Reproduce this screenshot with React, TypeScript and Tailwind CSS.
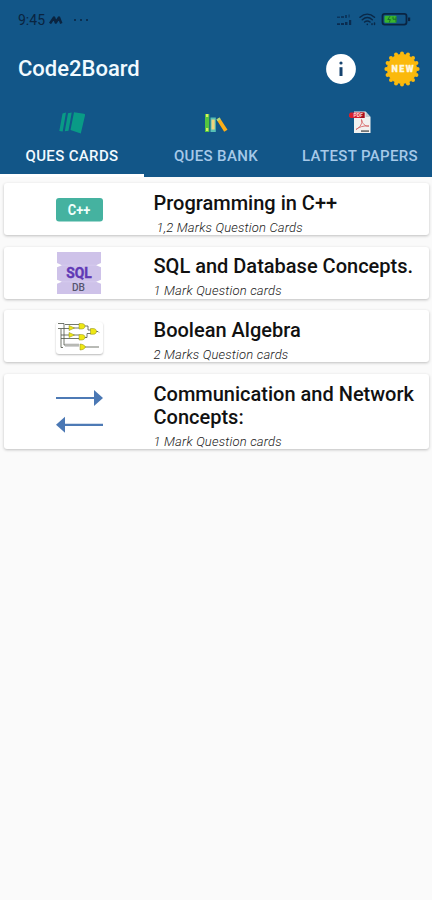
import type { ReactNode } from 'react';

function MotorolaIcon() {
  return (
    <svg width="14" height="8" viewBox="0 0 14 8" fill="none" stroke="#0a2440" strokeWidth="2.5" strokeLinejoin="round">
      <path d="M1 7.5 5 1.5 6.8 6.5 10 1.5 12.3 7.5" />
    </svg>
  );
}

function StatusIcons() {
  return (
    <svg width="76" height="16" viewBox="0 0 76 16" fill="none">
      <g fill="#0a2c50">
        <path d="M1 4.5h3v1.5H1zM5 4h3v2H5zM9 3h2v3H9zM12.5 2.5h1.2v3h-1.2z" opacity=".75" />
        <path d="M1 11.2h3v1.8H1zM5 11h3v2H5zM9 10h2.5v3H9zM13 8h2.2v5H13z" />
      </g>
      <g stroke="#0a2847" strokeWidth="1.5" strokeLinecap="round">
        <path d="M24 5.3c4.5-4 10-4 14.5 0M26.3 7.7c3.2-2.8 6.8-2.8 10 0M28.6 10c1.8-1.4 3.6-1.4 5.4 0" />
        <path d="M31.3 12.3v.1M36 11.8v.6M38.5 11v1.4" />
      </g>
      <rect x="46.5" y="1.8" width="24" height="10.8" rx="2.3" stroke="#0a2442" strokeWidth="1.8" />
      <path d="M72 5.5h2.2v3.6H72z" fill="#0a2442" />
      <rect x="48.5" y="3.8" width="12" height="6.9" rx="1" fill="#39b52d" />
      <path d="m54 4.2-2.2 3.3h2.5l-1 3M57 4.7v2.5h3M60 4.7v5.5" stroke="#17672d" strokeWidth=".9" />
    </svg>
  );
}

function InfoIcon() {
  return (
    <svg width="30" height="30" viewBox="0 0 30 30">
      <circle cx="15" cy="15" r="14.9" fill="#fff" />
      <circle cx="15" cy="9" r="1.6" fill="#16436f" />
      <path d="M13.5 13.2h3V22h-3z" fill="#16436f" />
    </svg>
  );
}

function NewBadge() {
  const points = Array.from({ length: 16 }, (_, i) => {
    const angle = (i * Math.PI) / 8;
    return { x: 18 + 15.6 * Math.sin(angle), y: 18 - 15.6 * Math.cos(angle) };
  });

  return (
    <svg width="36" height="36" viewBox="0 0 36 36">
      <g fill="#fbb90c">
        <circle cx="18" cy="18" r="15" />
        {points.map((point, index) => (
          <circle key={index} cx={point.x} cy={point.y} r="2" />
        ))}
      </g>
      <text x="18.5" y="21.2" textAnchor="middle" textLength="22" fill="#fff7df" stroke="#fff7df" strokeWidth=".3" className="font-[Roboto,sans-serif] text-[9px] font-black">
        NEW
      </text>
    </svg>
  );
}

function CardsIcon() {
  return (
    <svg width="28" height="24" viewBox="0 0 28 24" fill="#099b86">
      <path d="M4.5 2.5 8 1.5 4.7 20.5 1.3 20zM10 2.2l3.7-.7-3.2 18.3-3.7.5zM16 1.3l10 1.5c.9.2 1.2.8 1 1.6L22.8 22.5 12.5 19z" />
    </svg>
  );
}

function BooksIcon() {
  return (
    <svg width="24" height="20" viewBox="0 0 24 20">
      <path d="M1 1h4.3v18H1z" fill="#54c43f" />
      <path d="M2 1h2.3v3H2zM2 15h2.3v3H2z" fill="#d8ed62" />
      <path d="M6.5 4.5h5.3V19H6.5z" fill="#57c0b4" />
      <path d="M7.500 6.500h3.200v10H7.500z" fill="#f1d27d" />
      <path d="m12.500 6.500 3-2 8 12.200-3.300 2z" fill="#fbad19" />
      <path d="m12.500 6.500 3-2 1.200 1.800-3 2z" fill="#a8d986" />
    </svg>
  );
}

function PdfIcon() {
  return (
    <svg width="24" height="24" viewBox="0 0 24 24">
      <path d="M6 .5h11.5L22.5 6v16H6z" fill="#f2f1ef" />
      <path d="M17.5.5V6h5z" fill="#c6cbd0" />
      <path d="M2.5 1.5h14V7h-14L1 5.5V3z" fill="#d61f2b" />
      <path d="M12 1.5h4.5V7H12z" fill="#a40f20" />
      <text x="5.5" y="5.9" fill="#ffd8d8" className="font-[Roboto,sans-serif] text-[5px] font-bold">PDF</text>
      <path d="M13.5 8.5c1 4-1 7.5-5.5 10 3-2.5 7-4 13-3.500-4 .5-6.500-2-7.500-6.500z" fill="none" stroke="#d76868" strokeWidth=".9" />
      <path d="M13 19.2h8V21h-8z" fill="#777" />
    </svg>
  );
}

function SqlIcon() {
  return (
    <svg width="46" height="43" viewBox="0 0 46 43">
      <path d="M1 0h44v11l-5 2.2 5 2.1v12.500l-5 2 5 2V42H1V31.800l5-2-5-2V15.300l5-2.100L1 11z" fill="#cec2e9" />
      <path d="M6 13.2h34M6 29.8h34" stroke="#d9cff0" strokeWidth=".7" />
      <text x="23" y="26.300" textAnchor="middle" textLength="25.5" lengthAdjust="spacingAndGlyphs" fill="#6039b5" stroke="#6039b5" strokeWidth=".4" className="font-[Roboto,sans-serif] text-[15.5px] font-bold">SQL</text>
      <text x="22.5" y="38.8" textAnchor="middle" textLength="13" lengthAdjust="spacingAndGlyphs" fill="#55556f" className="font-[Roboto,sans-serif] text-[10.5px] font-medium">DB</text>
    </svg>
  );
}

function CppIcon() {
  return (
    <svg width="47" height="24" viewBox="0 0 47 24">
      <rect width="47" height="23.5" rx="3" fill="#45b2a0" />
      <text x="23" y="16.8" textAnchor="middle" textLength="22.5" lengthAdjust="spacingAndGlyphs" fill="#f0fffb" className="font-[Roboto,sans-serif] text-[14px] font-bold">C++</text>
    </svg>
  );
}

function CircuitIcon() {
  return (
    <div className="mt-[2px] flex h-[32px] w-[47px] rounded-[3px] bg-white shadow-[0_1px_2px_rgba(0,0,0,0.28)]">
      <svg width="47" height="32" viewBox="0 0 47 32" fill="none">
        <path d="M2 1.5h6V23h15M2 6.5h12M5 7v18.5h2M5 13h9M5 16.5h18M9 2.5h14M17 6h6M17 13h6M28 4h4v4h3M28 15.5h3v-4h4M39 9.5h3l1 1M28 25h15" stroke="#4e5447" strokeWidth=".8" />
        <path d="M9 22h14M9 24.5h14" stroke="#b3b3b3" strokeWidth=".6" />
        <g fill="#eee713" stroke="#8b891c" strokeWidth=".5">
          <path d="M13 3.5 18.5 6 13 8.5zM13 10.5l5.5 2.5-5.5 2.5z" />
          <path d="M23 1.500h2.500C28 1.500 29 2.800 29 4.200S28 7 25.500 7H23zM23 12.500h2.500c2.500 0 3.500 1.300 3.500 2.700S28 18 25.500 18H23zM34.500 6.500h2.500c2.500 0 3.500 1.500 3.500 2.900s-1 2.900-3.500 2.900h-2.500zM24 22c3 .2 5 1.500 5.500 3-1 2-2.500 2.800-5.500 3z" />
        </g>
      </svg>
    </div>
  );
}

function ArrowsIcon() {
  return (
    <svg width="47" height="43" viewBox="0 0 47 43">
      <path d="M0 8h39M8 34.8h39" stroke="#4d7ab5" strokeWidth="2.2" />
      <path d="m38 0 9 8-9 8zM9 26.8v16L0 34.8z" fill="#4b78b4" />
    </svg>
  );
}

interface QuestionCardProps {
  icon: ReactNode;
  title: ReactNode;
  subtitle: string;
  indented?: boolean;
  tall?: boolean;
}

function QuestionCard({ icon, title, subtitle, indented, tall }: QuestionCardProps) {
  return (
    <article className={`flex rounded-[3px] bg-white shadow-[0_1px_3px_rgba(0,0,0,0.24)] ${tall ? 'h-[75px]' : 'h-[52px]'}`}>
      <div className={`flex w-[149.5px] shrink-0 justify-center pl-px ${tall ? 'items-start pt-4' : 'items-center pt-px'}`}>{icon}</div>
      <div className="pt-[8.5px]">
        <h2 className="text-[20px] leading-[23px] font-medium whitespace-nowrap text-[#111]">{title}</h2>
        <p className={`mt-[5px] text-[13px] leading-[16px] font-light tracking-[0.18px] whitespace-nowrap text-[#222] italic ${indented ? 'pl-[3px]' : ''}`}>{subtitle}</p>
      </div>
    </article>
  );
}

export default function App() {
  const tabs = [
    { label: 'QUES CARDS', icon: <CardsIcon /> },
    { label: 'QUES BANK', icon: <BooksIcon /> },
    { label: 'LATEST PAPERS', icon: <PdfIcon /> }
  ];

  const cards: QuestionCardProps[] = [
    { icon: <CppIcon />, title: 'Programming in C++', subtitle: '1,2 Marks Question Cards', indented: true },
    { icon: <SqlIcon />, title: 'SQL and Database Concepts.', subtitle: '1 Mark Question cards' },
    { icon: <CircuitIcon />, title: 'Boolean Algebra', subtitle: '2 Marks Question cards' },
    {
      icon: <ArrowsIcon />,
      title: <>Communication and Network<br />Concepts:</>,
      subtitle: '1 Mark Question cards',
      tall: true
    }
  ];

  return (
    <div className="h-[900px] w-[432px] overflow-hidden bg-[#fafafa] font-[Roboto,sans-serif]">
      <header className="h-[177px] bg-[#125688]">
        <div className="flex h-10 items-center pr-[20px] pl-[18px] text-[#0a2440]">
          <span className="text-[14px] leading-none">9:45</span>
          <span className="ml-1"><MotorolaIcon /></span>
          <span className="ml-[11px] flex gap-[4px]">
            <i className="size-[2px] rounded-full bg-[#0a2440]" />
            <i className="size-[2px] rounded-full bg-[#0a2440]" />
            <i className="size-[2px] rounded-full bg-[#0a2440]" />
          </span>
          <span className="ml-auto"><StatusIcons /></span>
        </div>
        <div className="flex h-[57px] items-center pr-3 pl-[18px]">
          <h1 className="text-[22px] leading-none font-medium text-[#f1faff]">Code2Board</h1>
          <div className="ml-auto flex items-center gap-[28px]">
            <InfoIcon />
            <NewBadge />
          </div>
        </div>
        <nav className="grid h-[80px] grid-cols-3">
          {tabs.map((tab, index) => (
            <button
              key={tab.label}
              className={`flex flex-col items-center pt-[14px] ${index === 0 ? 'border-b-[3px] border-white text-[#f2faff]' : 'text-[#a6c9e8]'}`}
            >
              <span className="flex h-[24px] items-center">{tab.icon}</span>
              <span className="mt-[12px] text-[15px] leading-[18px] font-medium tracking-[0.35px] whitespace-nowrap">{tab.label}</span>
            </button>
          ))}
        </nav>
      </header>
      <main className="flex flex-col gap-[11.7px] pt-[6px] pr-[3px] pl-1">
        {cards.map((card, index) => (
          <QuestionCard key={index} {...card} />
        ))}
      </main>
    </div>
  );
}
